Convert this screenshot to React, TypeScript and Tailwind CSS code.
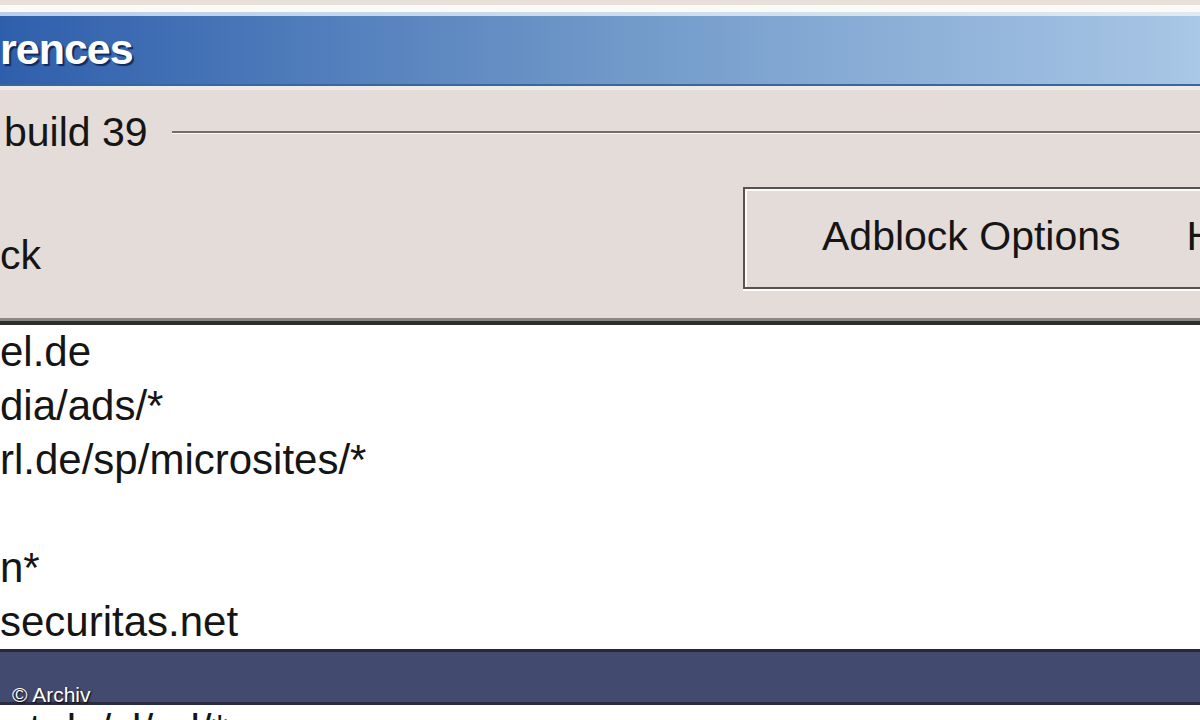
import React from "react";

const rows = ["el.de", "dia/ads/*", "rl.de/sp/microsites/*", "", "n*", "securitas.net"];

export default function App() {
  return (
    <div
      className="relative w-[1200px] h-[720px] overflow-hidden bg-[#e3dcd8] flex flex-col text-[#151515]"
      style={{ fontFamily: '"Liberation Sans", Arial, sans-serif' }}
    >
      {/* window top edge */}
      <div className="shrink-0 h-[5px] bg-[#e8e0d8]" />
      <div className="shrink-0 h-[7px] bg-[#fbfaf6]" />
      <div className="shrink-0 h-[4px] bg-gradient-to-r from-[#b9cfe8] to-[#dfe9f0]" />

      {/* title bar */}
      <div className="shrink-0 h-[70px] flex items-center bg-gradient-to-r from-[#2f5eac] via-[#6f98c8] to-[#a9c7e6] border-b-2 border-[#3c679e]">
        <span className="text-white font-bold text-[43px] leading-none tracking-[-1px] -mt-[2px] whitespace-nowrap [text-shadow:2px_2px_1px_#0f2a5c]">
          rences
        </span>
      </div>
      <div className="shrink-0 h-[4px] bg-[#eeeae6]" />

      {/* version row */}
      <div className="shrink-0 h-[88px] flex items-center">
        <span className="text-[41px] leading-tight pl-[4px] -mt-[2px] whitespace-nowrap">build 39</span>
        <div className="flex-1 ml-[24px] -mt-[4px] border-t-2 border-[#736c68] border-b border-b-[#fbf8f6]" />
      </div>

      {/* button row */}
      <div className="shrink-0 h-[140px] flex">
        <div className="w-[743px] shrink-0 flex items-center">
          <span className="text-[41px] leading-tight mt-[16px]">ck</span>
        </div>
        <div className="flex-1 pt-[9px] min-w-0 overflow-hidden">
          <div className="h-[102px] border-2 border-r-0 border-[#56524f] shadow-[inset_2px_2px_0_#fdfcfa,0_2px_0_#fdfcfa] flex items-center whitespace-nowrap">
            <span className="ml-[77px] text-[41px] leading-tight -mt-[2px]">Adblock Options</span>
            <span className="ml-[66px] text-[41px] leading-tight -mt-[2px]">H</span>
          </div>
        </div>
      </div>

      {/* list box border */}
      <div className="shrink-0 h-[3px] bg-[#8c8985]" />
      <div className="shrink-0 h-[4px] bg-[#2e2f2c]" />

      {/* list */}
      <div className="shrink-0 flex flex-col bg-white">
        {rows.map((r, i) => (
          <div key={i} className="h-[54px] flex items-center">
            <span className="text-[42px] leading-tight whitespace-nowrap">{r}</span>
          </div>
        ))}
        <div className="h-[56px] bg-[#434a6f] border-t-[3px] border-t-[#25273b] border-b-[3px] border-b-[#2a2c40]" />
        <div className="h-[54px] flex items-start bg-white">
          <span className="text-[42px] leading-tight pl-[6px] -mt-[1px] whitespace-nowrap">nt.de/cl/ad/*</span>
        </div>
      </div>

      {/* watermark */}
      <div className="absolute left-[12px] top-[684px] text-white text-[21px] leading-none [text-shadow:1px_1px_2px_#000]">
        © Archiv
      </div>
    </div>
  );
}
